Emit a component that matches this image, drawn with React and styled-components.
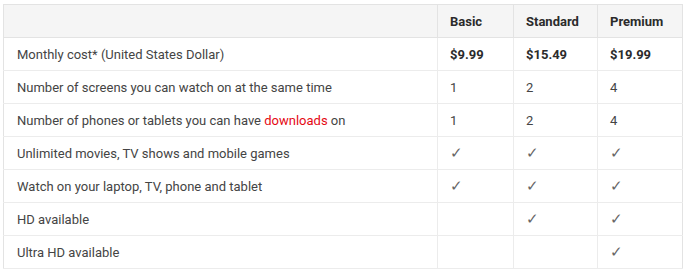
import React from "react";
import styled, { createGlobalStyle } from "styled-components";

const GlobalStyle = createGlobalStyle`
  body {
    margin: 0;
    background: #fff;
    font-family: Roboto, "Liberation Sans", Arial, sans-serif;
  }
`;

const Wrap = styled.div`
  padding: 4px 8px 0 3px;
`;

const Table = styled.table`
  border-collapse: collapse;
  width: 679px;
  table-layout: fixed;
  border: 1px solid #e3e3e3;
  font-size: 13px;
  color: #333;
`;

const Head = styled.th`
  box-sizing: border-box;
  background: #f5f5f5;
  height: 33px;
  padding: 0 12px;
  text-align: left;
  font-weight: 700;
  color: #2b2b2b;
  border-left: ${(p) => (p.$first ? "none" : "1px solid #e3e3e3")};
  border-bottom: 1px solid #e3e3e3;
  width: ${(p) => p.$w}px;
`;

const Cell = styled.td`
  box-sizing: border-box;
  height: 33px;
  padding: 0 ${(p) => (p.$label ? 13 : 12)}px;
  border-bottom: 1px solid #ececec;
  border-left: ${(p) => (p.$label ? "none" : "1px solid #ececec")};
  font-weight: ${(p) => (p.$bold ? 700 : 400)};
  font-size: ${(p) => (p.$check ? 15 : 13)}px;
  color: ${(p) => (p.$bold ? "#2b2b2b" : p.$check ? "#666" : "#444")};
  white-space: nowrap;
`;

const Red = styled.span`
  color: #e50914;
`;

const plans = [
  { name: "Basic", w: 76 },
  { name: "Standard", w: 84 },
  { name: "Premium", w: 85 },
];

const rows = [
  { label: "Monthly cost* (United States Dollar)", values: ["$9.99", "$15.49", "$19.99"], bold: true },
  { label: "Number of screens you can watch on at the same time", values: ["1", "2", "4"] },
  {
    label: (
      <>
        Number of phones or tablets you can have <Red>downloads</Red> on
      </>
    ),
    values: ["1", "2", "4"],
  },
  { label: "Unlimited movies, TV shows and mobile games", values: ["✓", "✓", "✓"], check: true },
  { label: "Watch on your laptop, TV, phone and tablet", values: ["✓", "✓", "✓"], check: true },
  { label: "HD available", values: ["", "✓", "✓"], check: true },
  { label: "Ultra HD available", values: ["", "", "✓"], check: true },
];

export default function App() {
  return (
    <>
      <GlobalStyle />
      <Wrap>
        <Table>
          <thead>
            <tr>
              <Head $first $w={434} />
              {plans.map((p) => (
                <Head key={p.name} $w={p.w}>
                  {p.name}
                </Head>
              ))}
            </tr>
          </thead>
          <tbody>
            {rows.map((r, i) => (
              <tr key={i}>
                <Cell $label>{r.label}</Cell>
                {r.values.map((v, j) => (
                  <Cell key={j} $bold={r.bold} $check={r.check}>
                    {v}
                  </Cell>
                ))}
              </tr>
            ))}
          </tbody>
        </Table>
      </Wrap>
    </>
  );
}
